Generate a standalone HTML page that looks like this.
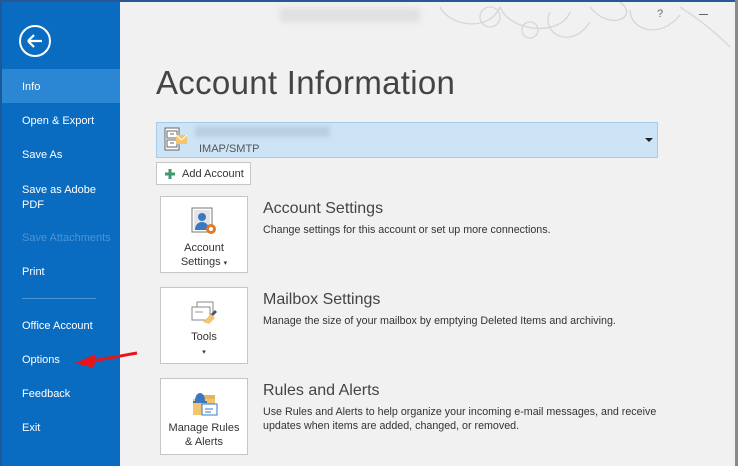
<!DOCTYPE html>
<html><head><meta charset="utf-8"><style>
*{margin:0;padding:0;box-sizing:border-box}
body{width:738px;height:466px;overflow:hidden;background:#f1f1f1;font-family:"Liberation Sans",sans-serif;position:relative}
.top{position:absolute;left:0;top:0;width:738px;height:2px;background:#2b5797}
.rb{position:absolute;right:0;top:0;width:3px;height:466px;background:#8a8a8a}
.side{position:absolute;left:0;top:2px;width:120px;height:464px;background:#0a6cc0;border-left:2px solid #1a5a9a}
.side .it{position:absolute;left:20px;color:#fff;font-size:11px}
.sel{position:absolute;left:0;top:67px;width:118px;height:34px;background:#2b87d3}
.div{position:absolute;left:20px;width:74px;height:1px;background:#4a95d6}
.abs{position:absolute}
h1{position:absolute;left:156px;top:64px;font-size:33px;font-weight:normal;color:#444;letter-spacing:0.3px}
.acct{position:absolute;left:156px;top:122px;width:502px;height:36px;background:#cde4f6;border:1px solid #a9cbe8}
.btn{position:absolute;left:156px;top:162px;width:95px;height:23px;background:#fff;border:1px solid #c6c6c6;font-size:11px;color:#333;padding:5px 0 0 25px}
.card{position:absolute;left:160px;width:88px;height:77px;background:#fff;border:1px solid #c6c6c6;font-size:11px;color:#333;text-align:center;line-height:14px}
.t{position:absolute;left:263px;font-size:16px;color:#444}
.d{position:absolute;left:263px;font-size:10.7px;color:#333;line-height:14px}
</style></head><body>
<div class="top"></div>
<svg class="abs" style="left:400px;top:2px" width="335" height="50" viewBox="0 0 335 50"><g fill="none" stroke="#d6d6d6" stroke-width="1.3">
<path d="M40 5c10 20 50 25 60 0M100 5c10 25 60 30 70 5M150 10c-10 20 20 40 40 10M190 5c20 25 50 10 30-5M230 8c0 20 30 30 50 5M280 5c15 10 30 20 50 40"/>
<circle cx="130" cy="28" r="8"/><circle cx="90" cy="15" r="10"/></g></svg>
<div class="abs" style="left:280px;top:8px;width:140px;height:14px;background:#e0e0e0;filter:blur(3px)"></div>
<div class="abs" style="left:657px;top:8px;font-size:11px;color:#666">?</div>
<div class="abs" style="left:699px;top:14px;width:9px;height:1px;background:#666"></div>
<div class="rb"></div>
<div class="side">
<div class="sel"></div>
<svg class="abs" style="left:16px;top:22px" width="34" height="34" viewBox="0 0 34 34"><circle cx="17" cy="17" r="15" fill="none" stroke="#fff" stroke-width="2"/><path d="M10 17h14M10 17l6-6M10 17l6 6" stroke="#fff" stroke-width="2.2" fill="none"/></svg>
<div class="it" style="top:79px">Info</div>
<div class="it" style="top:113px">Open &amp; Export</div>
<div class="it" style="top:147px">Save As</div>
<div class="it" style="top:181px;line-height:15px">Save as Adobe<br>PDF</div>
<div class="it" style="top:230px;color:#4a95d8">Save Attachments</div>
<div class="it" style="top:264px">Print</div>
<div class="div" style="top:296px"></div>
<div class="it" style="top:318px">Office Account</div>
<div class="it" style="top:352px">Options</div>
<div class="it" style="top:386px">Feedback</div>
<div class="it" style="top:420px">Exit</div>
</div>
<svg class="abs" style="left:70px;top:348px" width="70" height="22" viewBox="0 0 70 22"><path d="M67 5L22 13" stroke="#e8141b" stroke-width="3"/><path d="M5 15L26 6L24 20Z" fill="#e8141b"/></svg>
<h1>Account Information</h1>
<div class="acct">
<svg class="abs" style="left:7px;top:4px" width="26" height="26" viewBox="0 0 26 26"><rect x="1" y="1" width="14" height="22" fill="#fff" stroke="#666"/><rect x="3" y="4" width="10" height="7" fill="none" stroke="#666"/><rect x="3" y="13" width="10" height="7" fill="none" stroke="#666"/><path d="M6 7h4M6 16h4" stroke="#666"/><rect x="12" y="8" width="11" height="9" fill="#f2c56e"/><path d="M12 8l5.5 5 5.5-5" stroke="#fff" fill="none"/></svg>
<div class="abs" style="left:38px;top:3px;width:135px;height:11px;background:#b8cfe2;filter:blur(2px)"></div>
<div class="abs" style="left:42px;top:20px;font-size:11px;color:#555">IMAP/SMTP</div>
<div class="abs" style="left:488px;top:15px;width:0;height:0;border-left:4px solid transparent;border-right:4px solid transparent;border-top:4px solid #222"></div>
</div>
<div class="btn"><svg class="abs" style="left:8px;top:6px" width="10" height="10"><path d="M5 0v10M0 5h10" stroke="#3e9a6d" stroke-width="3"/></svg>Add Account</div>
<div class="card" style="top:196px"><svg style="margin-top:10px" width="30" height="30" viewBox="0 0 30 30"><rect x="3" y="1" width="20" height="24" fill="#fff" stroke="#777"/><rect x="5" y="3" width="16" height="20" fill="#e4e4e4"/><circle cx="13" cy="10" r="4" fill="#3a78c0"/><path d="M6 23c0-6 4-8 7-8s7 2 7 8z" fill="#3a78c0"/><circle cx="22" cy="22" r="5" fill="#e07a2a"/><circle cx="22" cy="22" r="2" fill="#fff"/></svg><div>Account<br>Settings <span style="font-size:7px">▾</span></div></div>
<div class="card" style="top:287px"><svg style="margin-top:12px" width="30" height="26" viewBox="0 0 30 26"><rect x="8" y="2" width="16" height="12" fill="#fff" stroke="#888"/><rect x="3" y="7" width="18" height="13" fill="#fff" stroke="#888"/><path d="M6 12h8" stroke="#999"/><path d="M14 22l8-8 4 4-6 6z" fill="#f2c56e"/><path d="M22 14l4-4 2 2-4 4" fill="#555"/></svg><div>Tools<br><span style="font-size:7px">▾</span></div></div>
<div class="card" style="top:378px"><svg style="margin-top:10px" width="30" height="28" viewBox="0 0 30 28"><path d="M4 10h22v16H4z" fill="#f2c56e"/><path d="M14 6h12v4H14z" fill="#e3b55c"/><path d="M6 12c0-6 3-8 5-8s5 2 5 8z" fill="#3a78c0"/><rect x="4" y="12" width="14" height="2" fill="#3a78c0"/><rect x="13" y="15" width="15" height="11" fill="#fff" stroke="#3a78c0"/><path d="M16 20h8M16 23h6" stroke="#3a78c0"/></svg><div>Manage Rules<br>&amp; Alerts</div></div>
<div class="t" style="top:200px">Account Settings</div>
<div class="d" style="top:223px">Change settings for this account or set up more connections.</div>
<div class="t" style="top:291px">Mailbox Settings</div>
<div class="d" style="top:314px">Manage the size of your mailbox by emptying Deleted Items and archiving.</div>
<div class="t" style="top:382px">Rules and Alerts</div>
<div class="d" style="top:405px">Use Rules and Alerts to help organize your incoming e-mail messages, and receive<br>updates when items are added, changed, or removed.</div>
</body></html>
